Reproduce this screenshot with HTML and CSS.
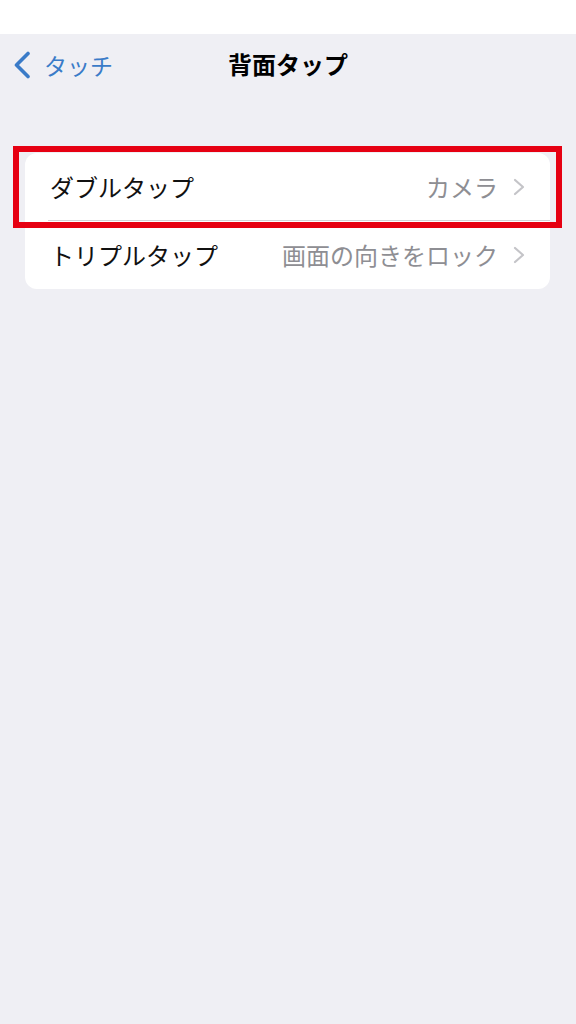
FILE: index.html
```html
<!DOCTYPE html>
<html>
<head>
  <meta charset="utf-8">
  <title>背面タップ</title>
  <link rel="stylesheet" href="styles.css">
</head>
<body>
  <div class="statusBar"></div>

  <div class="navBar">
    <a class="backLink" href="#">
      <svg class="backIcon" width="18" height="28" viewBox="0 0 18 28">
        <path d="M15 2.5 L3.5 14 L15 25.5" fill="none" stroke="currentColor" stroke-width="3.6" stroke-linecap="round" stroke-linejoin="round"/>
      </svg>
      <span>タッチ</span>
    </a>
    <h1 class="navTitle">背面タップ</h1>
    <div></div>
  </div>

  <div class="content">
    <div class="group">
      <div class="row">
        <span class="rowLabel">ダブルタップ</span>
        <span class="rowValue">カメラ</span>
        <svg class="chevron" width="12" height="18" viewBox="0 0 12 18">
          <path d="M2 2 L10 9 L2 16" fill="none" stroke="currentColor" stroke-width="2.2" stroke-linecap="round" stroke-linejoin="round"/>
        </svg>
        <div class="highlight"></div>
      </div>
      <div class="sep"></div>
      <div class="row">
        <span class="rowLabel">トリプルタップ</span>
        <span class="rowValue">画面の向きをロック</span>
        <svg class="chevron" width="12" height="18" viewBox="0 0 12 18">
          <path d="M2 2 L10 9 L2 16" fill="none" stroke="currentColor" stroke-width="2.2" stroke-linecap="round" stroke-linejoin="round"/>
        </svg>
      </div>
    </div>
  </div>
</body>
</html>
```

FILE: styles.css
```css
body {
  margin: 0;
  height: 1024px;
  background: #efeff4;
  font-family: "Noto Sans CJK JP", "Noto Sans", sans-serif;
  color: #000;
}
.statusBar { height: 34px; background: #fff; }

.navBar {
  height: 62px;
  display: grid;
  grid-template-columns: 1fr auto 1fr;
  align-items: center;
}
.backLink {
  display: flex;
  align-items: center;
  gap: 13px;
  padding-left: 13px;
  color: #3a7bc8;
  text-decoration: none;
  font-size: 23px;
  line-height: 1;
}
.backIcon { display: block; }
.navTitle { margin: 0 0 2px; font-size: 24px; font-weight: 700; line-height: 1; }

.content { padding: 57px 26px 0 25px; }
.group { background: #fff; border-radius: 12px; }

.row {
  position: relative;
  height: 67px;
  display: flex;
  align-items: center;
  padding: 0 25px;
  font-size: 24px;
  line-height: 1;
}
.sep + .row { height: 68px; }
.rowLabel { flex: 1; color: #111; }
.rowValue { color: #8e8e93; margin-right: 15px; }
.chevron { display: block; color: #c4c4c8; }
.sep { height: 1px; margin-left: 23px; background: #d1d1d6; }

.highlight {
  position: absolute;
  top: -7px;
  left: -12px;
  right: -12px;
  bottom: -8px;
  border: 6px solid #e60012;
  box-sizing: border-box;
}
```
